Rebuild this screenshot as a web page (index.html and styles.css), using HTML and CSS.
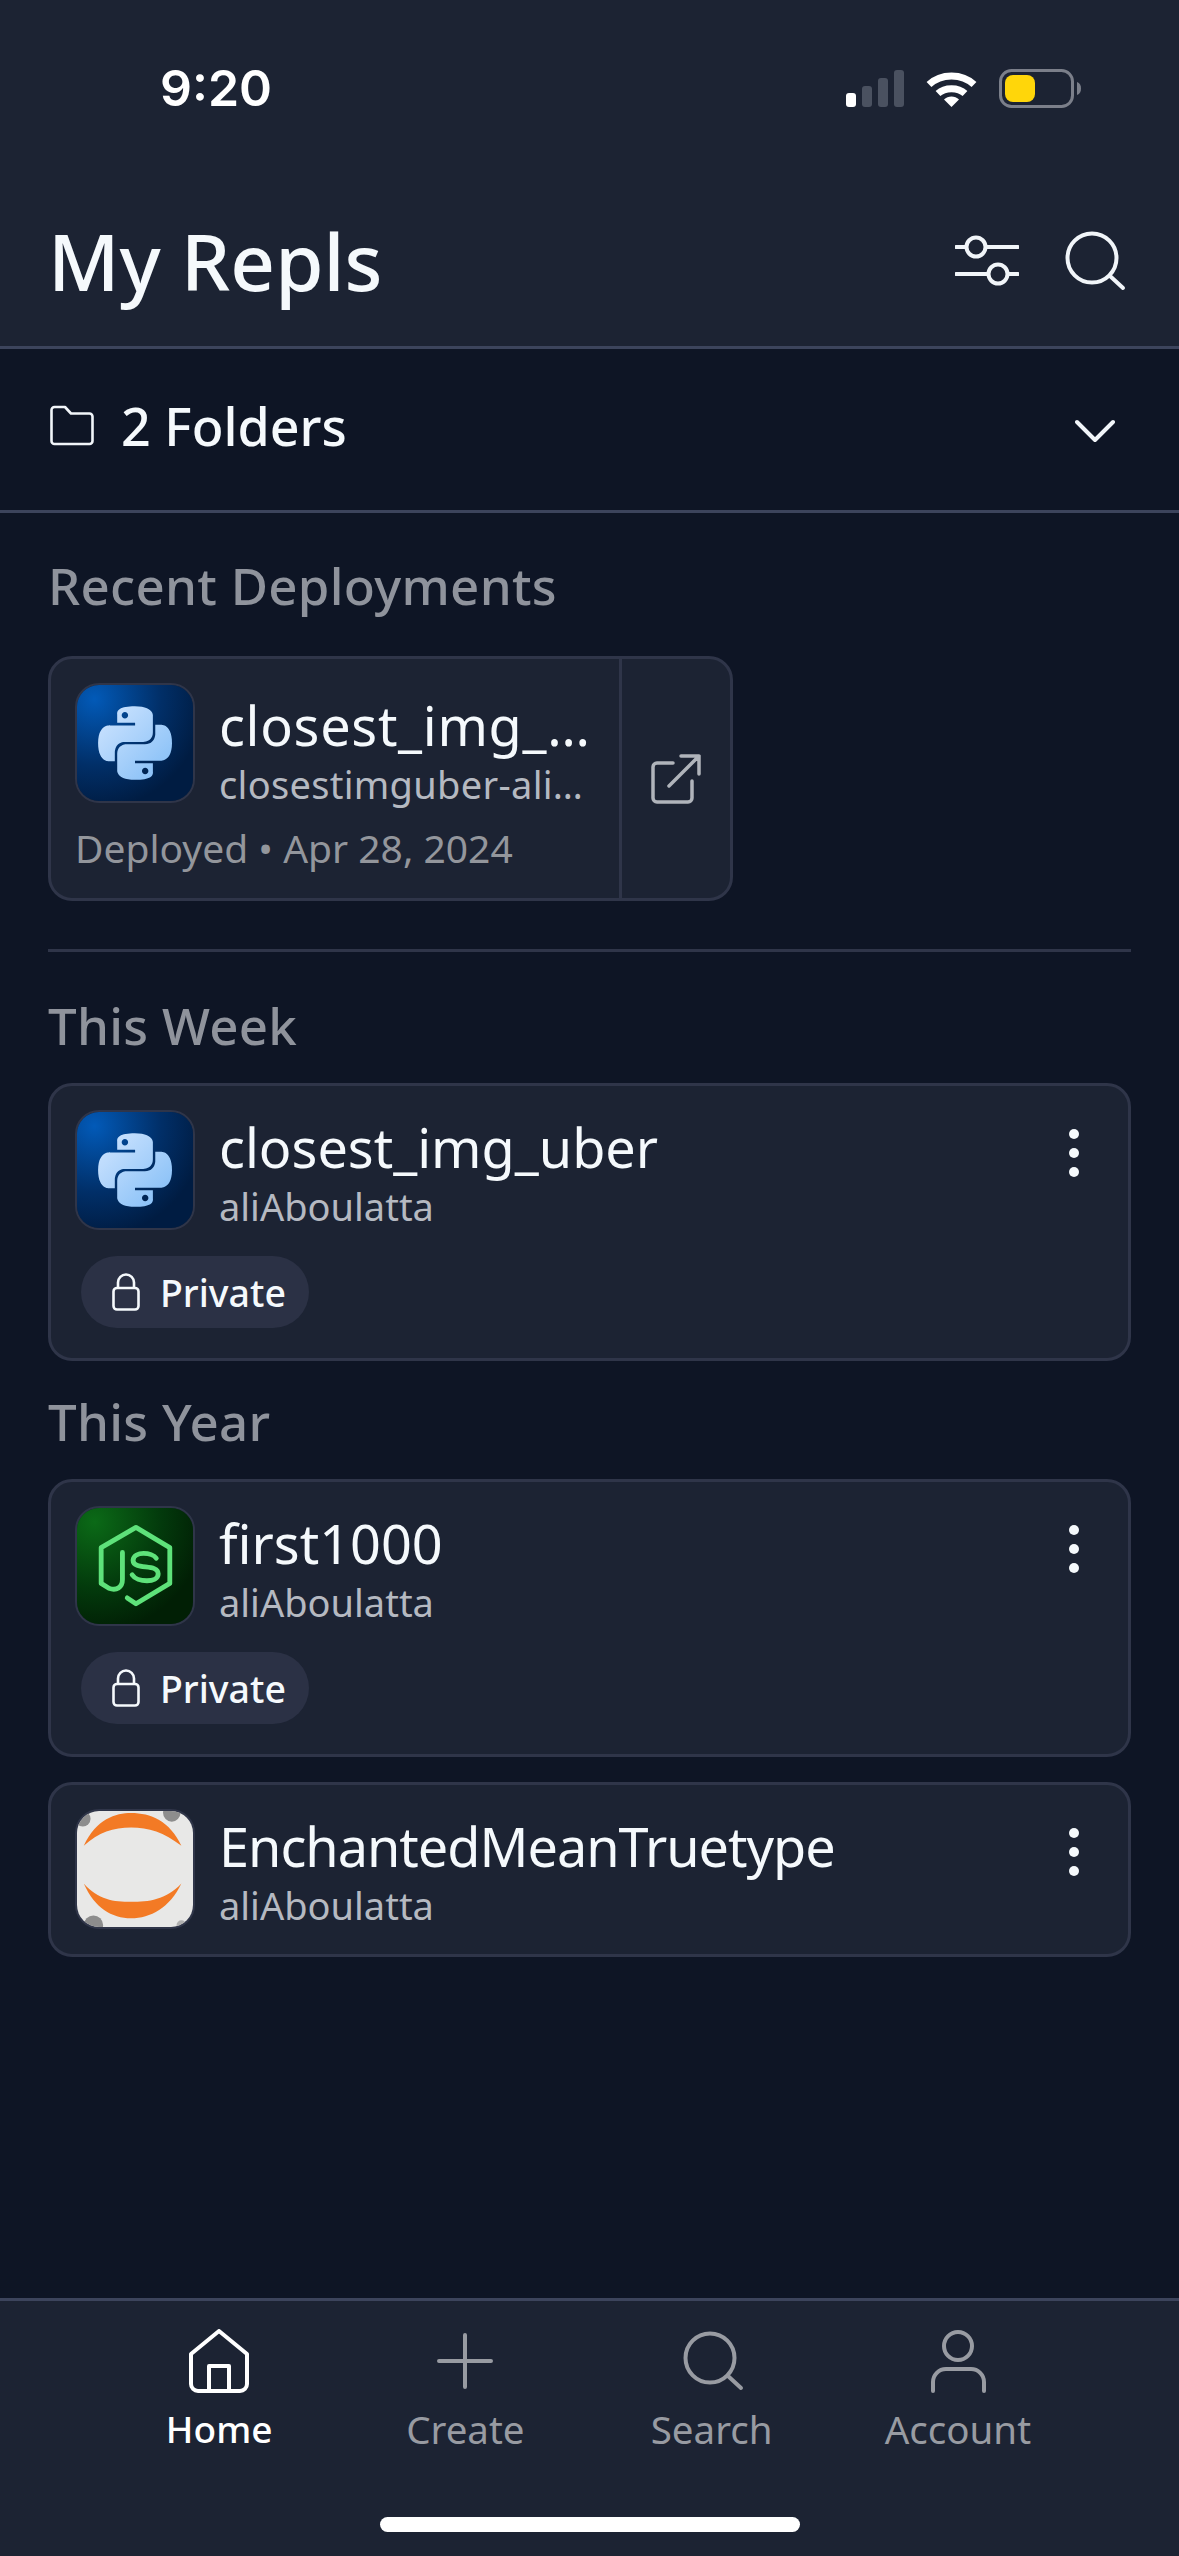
FILE: index.html
```html
<!DOCTYPE html>
<html lang="en">
<head>
    <meta charset="UTF-8">
    <meta name="viewport" content="width=device-width, initial-scale=1.0">
    <title>My Repls</title>
    <link rel="stylesheet" href="styles.css">
</head>
<body>
    <svg class="defs" width="0" height="0">
        <defs>
            <radialGradient id="py-bg" cx="0.15" cy="0.12" r="0.95">
                <stop offset="0" stop-color="#025ab8"/>
                <stop offset="0.6" stop-color="#012f68"/>
                <stop offset="1" stop-color="#001c42"/>
            </radialGradient>
            <linearGradient id="py-fg" x1="0" y1="0" x2="1" y2="1">
                <stop offset="0" stop-color="#d2e6ff"/>
                <stop offset="1" stop-color="#80bcf6"/>
            </linearGradient>
            <radialGradient id="js-bg" cx="0.15" cy="0.12" r="0.95">
                <stop offset="0" stop-color="#0b6a17"/>
                <stop offset="0.6" stop-color="#033a0c"/>
                <stop offset="1" stop-color="#011f05"/>
            </radialGradient>
            <symbol id="python" viewBox="0 0 120 120">
                <rect width="120" height="120" fill="url(#py-bg)"/>
                <g transform="translate(22 22) scale(3.17)">
                    <path fill="url(#py-fg)" d="M14.25.18l.9.2.73.26.59.3.45.32.34.34.25.34.16.33.1.3.04.26.02.2-.01.13V8.5l-.05.63-.13.55-.21.46-.26.38-.3.31-.33.25-.35.19-.35.14-.33.1-.3.07-.26.04-.21.02H8.77l-.69.05-.59.14-.5.22-.41.27-.33.32-.27.35-.2.36-.15.37-.1.35-.07.32-.04.27-.02.21v3.06H3.17l-.21-.03-.28-.07-.32-.12-.35-.18-.36-.26-.36-.36-.35-.46-.32-.59-.28-.73-.21-.88-.14-1.05-.05-1.23.06-1.22.16-1.04.24-.87.32-.71.36-.57.4-.44.42-.33.42-.24.4-.16.36-.1.32-.05.24-.01h.16l.06.01h8.16v-.83H6.18l-.01-2.75-.02-.37.05-.34.11-.31.17-.28.25-.26.31-.23.38-.2.44-.18.51-.15.58-.12.64-.1.71-.06.77-.04.84-.02 1.27.05zm-6.3 1.98l-.23.33-.08.41.08.41.23.34.33.22.41.09.41-.09.33-.22.23-.34.08-.41-.08-.41-.23-.33-.33-.22-.41-.09-.41.09zm13.09 3.95l.28.06.32.12.35.18.36.27.36.35.35.47.32.59.28.73.21.88.14 1.04.05 1.23-.06 1.23-.16 1.04-.24.86-.32.71-.36.57-.4.45-.42.33-.42.24-.4.16-.36.09-.32.05-.24.02-.16-.01h-8.22v.82h5.84l.01 2.76.02.36-.05.34-.11.31-.17.29-.25.25-.31.24-.38.2-.44.17-.51.15-.58.13-.64.09-.71.07-.77.04-.84.01-1.27-.04-1.07-.14-.9-.2-.73-.25-.59-.3-.45-.33-.34-.34-.25-.34-.16-.33-.1-.3-.04-.25-.02-.2.01-.13v-5.34l.05-.64.13-.54.21-.46.26-.38.3-.32.33-.24.35-.2.35-.14.33-.1.3-.06.26-.04.21-.02.13-.01h5.84l.69-.05.59-.14.5-.21.41-.28.33-.32.27-.35.2-.36.15-.36.1-.35.07-.32.04-.28.02-.21V6.07h2.09l.14.01zm-6.47 14.25l-.23.33-.08.41.08.41.23.33.33.23.41.08.41-.08.33-.23.23-.33.08-.41-.08-.41-.23-.33-.33-.23-.41-.08-.41.08z"/>
                </g>
            </symbol>
            <symbol id="lock" viewBox="0 0 28 38">
                <rect x="1.5" y="15" width="25" height="21.5" rx="3.5" fill="none" stroke="currentColor" stroke-width="2.6"/>
                <path d="M6 15V9.500a8 8 0 0 1 16 0V15" fill="none" stroke="currentColor" stroke-width="2.600"/>
            </symbol>
            <symbol id="dots" viewBox="0 0 12 50">
                <circle cx="6" cy="6" r="5" fill="#f5f9fc"/>
                <circle cx="6" cy="25" r="5" fill="#f5f9fc"/>
                <circle cx="6" cy="44" r="5" fill="#f5f9fc"/>
            </symbol>
        </defs>
    </svg>

    <header class="topbar">
        <div class="status">
            <span class="time">9:20</span>
            <div class="status-icons">
                <svg width="58" height="37" viewBox="0 0 58 37">
                    <rect x="0" y="23" width="10" height="14" rx="3" fill="#fff"/>
                    <rect x="16" y="16" width="10" height="21" rx="3" fill="#4a5160"/>
                    <rect x="32" y="8" width="10" height="29" rx="3" fill="#4a5160"/>
                    <rect x="48" y="0" width="10" height="37" rx="3" fill="#4a5160"/>
                </svg>
                <svg width="51" height="37" viewBox="0 0 51 37">
                    <path d="M3 14.500C15 3 36 3 48 14.500" fill="none" stroke="#fff" stroke-width="7"/>
                    <path d="M12 23.500C19 17 32 17 39 23.500" fill="none" stroke="#fff" stroke-width="7"/>
                    <path d="M18 29.500C22 25.500 29 25.500 33 29.500L25.500 37Z" fill="#fff"/>
                </svg>
                <svg width="82" height="39" viewBox="0 0 82 39">
                    <rect x="1.500" y="1.500" width="72" height="36" rx="11" fill="none" stroke="#7b7f8a" stroke-width="3"/>
                    <rect x="6" y="6" width="30" height="27" rx="8" fill="#ffd60a"/>
                    <path d="M78 13c3 1 4 3.500 4 6.500s-1 5.500-4 6.500Z" fill="#7b7f8a"/>
                </svg>
            </div>
        </div>
        <div class="title-row">
            <h1>My Repls</h1>
            <div class="title-actions">
                <svg width="64" height="64" viewBox="0 0 64 64" fill="none" stroke="#f1f5f9" stroke-width="4" stroke-linecap="round">
                    <path d="M1 18H11M31 18H63M1 45H33M53 45H63"/>
                    <circle cx="21" cy="18" r="9.500"/>
                    <circle cx="43" cy="45" r="9.500"/>
                </svg>
                <svg width="64" height="64" viewBox="0 0 64 64" fill="none" stroke="#f1f5f9" stroke-width="4" stroke-linecap="round">
                    <circle cx="29" cy="29" r="24.500"/>
                    <path d="M47 47L60 59"/>
                </svg>
            </div>
        </div>
    </header>

    <div class="folders">
        <svg width="44" height="64" viewBox="0 0 44 64" fill="none" stroke="#f1f5f9" stroke-width="2.600" stroke-linejoin="round">
            <path d="M1.500 12a3 3 0 0 1 3-3H15L21 15.500H39.500a3 3 0 0 1 3 3V43a3 3 0 0 1-3 3H4.500a3 3 0 0 1-3-3Z"/>
        </svg>
        <span class="folders-label">2 Folders</span>
        <svg class="chevron" width="40" height="24" viewBox="0 0 40 24" fill="none" stroke="#f1f5f9" stroke-width="4" stroke-linecap="round" stroke-linejoin="round">
            <path d="M2 3L20 21L38 3"/>
        </svg>
    </div>

    <main class="content">
        <h2 class="section-title first">Recent Deployments</h2>
        <div class="card deploy-card">
            <div class="deploy-info">
                <div class="repl-row">
                    <svg class="repl-icon"><use href="#python"/></svg>
                    <div class="repl-text deploy-text">
                        <div class="repl-name">closest_img_…</div>
                        <div class="repl-owner">closestimguber-ali…</div>
                    </div>
                </div>
                <div class="deploy-meta">Deployed • Apr 28, 2024</div>
            </div>
            <div class="deploy-link">
                <svg width="50" height="50" viewBox="0 0 50 50" fill="none" stroke="#b0b4bb" stroke-width="3.500" stroke-linecap="round" stroke-linejoin="round">
                    <path d="M22 9H6a4 4 0 0 0-4 4V44a4 4 0 0 0 4 4H37a4 4 0 0 0 4-4V27"/>
                    <path d="M18 32L48 2M30 2H48V20"/>
                </svg>
            </div>
        </div>
        <hr class="rule">

        <h2 class="section-title">This Week</h2>
        <div class="card">
            <div class="repl-row">
                <svg class="repl-icon"><use href="#python"/></svg>
                <div class="repl-text">
                    <div class="repl-name">closest_img_uber</div>
                    <div class="repl-owner">aliAboulatta</div>
                </div>
                <svg class="more"><use href="#dots"/></svg>
            </div>
            <div class="pill">
                <svg class="pill-lock"><use href="#lock"/></svg>
                <span>Private</span>
            </div>
        </div>

        <h2 class="section-title">This Year</h2>
        <div class="card">
            <div class="repl-row">
                <svg class="repl-icon" viewBox="0 0 120 120">
                    <rect width="120" height="120" fill="url(#js-bg)"/>
                    <g fill="none" stroke="#5ee27a" stroke-width="5" stroke-linecap="round" stroke-linejoin="round">
                        <path d="M52 93L61 99L96 78V41L61 20L25 41V78L33 83C41 86 47 82 47 74V46"/>
                        <path d="M82 52C78 46 59 44 58 54C58 65 84 57 84 68C84 78 62 77 57 69"/>
                    </g>
                </svg>
                <div class="repl-text">
                    <div class="repl-name">first1000</div>
                    <div class="repl-owner">aliAboulatta</div>
                </div>
                <svg class="more"><use href="#dots"/></svg>
            </div>
            <div class="pill">
                <svg class="pill-lock"><use href="#lock"/></svg>
                <span>Private</span>
            </div>
        </div>

        <div class="card next-card">
            <div class="repl-row">
                <svg class="repl-icon" viewBox="0 0 120 120">
                    <rect width="120" height="120" fill="#e8e8e7"/>
                    <circle cx="6" cy="8" r="8" fill="#8d8d8d"/>
                    <circle cx="98" cy="2" r="9" fill="#8d8d8d"/>
                    <circle cx="17" cy="118" r="10" fill="#8d8d8d"/>
                    <circle cx="108" cy="118" r="5" fill="#b0b0b0"/>
                    <path d="M7 36C20 8 40 2 56 2C76 2 96 10 108 36C90 22 74 17 56 17C38 17 22 22 7 36Z" fill="#f37a25"/>
                    <path d="M7 75C22 92 38 94 56 94C74 94 92 92 108 75C96 100 76 111 56 111C36 111 18 100 7 75Z" fill="#f37a25"/>
                </svg>
                <div class="repl-text">
                    <div class="repl-name long-name">EnchantedMeanTruetype</div>
                    <div class="repl-owner">aliAboulatta</div>
                </div>
                <svg class="more"><use href="#dots"/></svg>
            </div>
        </div>
    </main>

    <nav class="tabbar">
        <div class="tabs">
            <div class="tab active">
                <svg width="64" height="64" viewBox="0 0 64 64" fill="none" stroke="currentColor" stroke-width="4" stroke-linejoin="round">
                    <path d="M32 2L4 25V55a7 7 0 0 0 7 7H53a7 7 0 0 0 7-7V25Z"/>
                    <path d="M22 62V37H42V62"/>
                </svg>
                <span>Home</span>
            </div>
            <div class="tab">
                <svg width="64" height="64" viewBox="0 0 64 64" fill="none" stroke="currentColor" stroke-width="4" stroke-linecap="round">
                    <path d="M32 6V58M6 32H58"/>
                </svg>
                <span>Create</span>
            </div>
            <div class="tab">
                <svg width="64" height="64" viewBox="0 0 64 64" fill="none" stroke="currentColor" stroke-width="4" stroke-linecap="round">
                    <circle cx="30" cy="29" r="24.500"/>
                    <path d="M48 47L61 59"/>
                </svg>
                <span>Search</span>
            </div>
            <div class="tab">
                <svg width="64" height="64" viewBox="0 0 64 64" fill="none" stroke="currentColor" stroke-width="4" stroke-linecap="round">
                    <circle cx="32" cy="17" r="14"/>
                    <path d="M7 62V53a13 13 0 0 1 13-13H45a13 13 0 0 1 13 13V62"/>
                </svg>
                <span>Account</span>
            </div>
        </div>
        <div class="home-indicator"></div>
    </nav>
</body>
</html>
```
FILE: styles.css
```css
body {
    margin: 0;
    width: 1179px;
    height: 2556px;
    display: flex;
    flex-direction: column;
    background-color: #0e1525;
    color: #f5f9fc;
    font-family: "Noto Sans", "Open Sans", sans-serif;
    overflow: hidden;
}
.defs {
    position: absolute;
}
.topbar {
    height: 346px;
    background-color: #1c2333;
    border-bottom: 3px solid #3c445c;
}
.status {
    height: 229px;
    box-sizing: border-box;
    padding: 60px 98px 0 160px;
    display: flex;
    justify-content: space-between;
    align-items: flex-start;
}
.time {
    font-family: Inter, sans-serif;
    font-size: 50px;
    font-weight: 600;
    line-height: 56px;
    color: #fff;
}
.status-icons {
    display: flex;
    align-items: center;
    gap: 22px;
    height: 56px;
}
.title-row {
    height: 64px;
    padding: 0 52px 0 48px;
    display: flex;
    justify-content: space-between;
    align-items: center;
}
h1 {
    margin: 0;
    font-size: 78px;
    font-weight: 500;
    line-height: 64px;
}
.title-actions {
    display: flex;
    gap: 44px;
}
.folders {
    height: 161px;
    padding: 0 64px 0 50px;
    display: flex;
    align-items: center;
    border-bottom: 3px solid #3c445c;
}
.folders-label {
    margin-left: 27px;
    margin-bottom: 8px;
    font-size: 52px;
    font-weight: 500;
    line-height: 60px;
}
.chevron {
    margin-left: auto;
    margin-top: 2px;
}
.content {
    flex: 1;
    padding: 0 48px;
}
.section-title {
    margin: 34px 0 32px;
    font-size: 51px;
    font-weight: 500;
    line-height: 52px;
    letter-spacing: 0.3px;
    color: #8f939c;
}
.section-title.first {
    margin: 46px 0 45px;
}
.card {
    padding: 24px 24px 25px;
    background-color: #1c2333;
    border: 3px solid #2f3549;
    border-radius: 24px;
}
.next-card {
    margin-top: 25px;
}
.rule {
    height: 3px;
    margin: 48px 0 0;
    border: 0;
    background-color: #2f3549;
}
.rule + .section-title {
    margin-top: 47px;
}
.repl-row {
    display: flex;
    align-items: flex-start;
    gap: 24px;
}
.repl-icon {
    flex: none;
    width: 120px;
    height: 120px;
    border-radius: 24px;
    border: 2px solid #2f3549;
    box-sizing: border-box;
}
.repl-text {
    padding-top: 5px;
    min-width: 0;
}
.repl-name {
    font-size: 54px;
    line-height: 64px;
    white-space: nowrap;
}
.long-name {
    letter-spacing: -1px;
}
.repl-owner {
    margin-top: 4px;
    font-size: 38px;
    line-height: 46px;
    color: #b5b9c1;
    white-space: nowrap;
}
.more {
    width: 12px;
    height: 50px;
    margin: 18px 24px 0 auto;
    flex: none;
}
.pill {
    width: 228px;
    height: 72px;
    margin: 26px 0 5px 6px;
    box-sizing: border-box;
    padding-left: 31px;
    display: flex;
    align-items: center;
    gap: 20px;
    background-color: #2b3145;
    border-radius: 36px;
    font-size: 37.500px;
    font-weight: 500;
}
.pill-lock {
    width: 28px;
    height: 38px;
    flex: none;
}
.deploy-card {
    width: 685px;
    box-sizing: border-box;
    display: flex;
    padding: 0;
}
.deploy-info {
    width: 568px;
    box-sizing: border-box;
    padding: 24px 16px 27px 24px;
}
.deploy-text {
    padding-top: 10px;
    height: 120px;
    box-sizing: border-box;
}
.deploy-text .repl-name {
    letter-spacing: 0.7px;
}
.deploy-text .repl-owner {
    letter-spacing: 0.3px;
}
.deploy-meta {
    margin-top: 22px;
    font-size: 39px;
    line-height: 46px;
    color: #93969c;
}
.deploy-link {
    flex: 1;
    display: flex;
    align-items: center;
    justify-content: center;
    border-left: 3px solid #2f3549;
}
.tabbar {
    height: 258px;
    box-sizing: border-box;
    padding-top: 28px;
    display: flex;
    flex-direction: column;
    align-items: center;
    background-color: #1c2333;
    border-top: 3px solid #3c445c;
}
.tabs {
    width: 100%;
    box-sizing: border-box;
    padding: 0 98px 0 96px;
    display: grid;
    grid-template-columns: repeat(4, 1fr);
}
.tab {
    display: flex;
    flex-direction: column;
    align-items: center;
    gap: 14px;
    font-size: 38.500px;
    line-height: 44px;
    color: #989ba2;
}
.tab.active {
    color: #fff;
    font-size: 37px;
    font-weight: 500;
}
.home-indicator {
    width: 420px;
    height: 15px;
    margin-top: auto;
    margin-bottom: 24px;
    background-color: #fff;
    border-radius: 8px;
}
```
